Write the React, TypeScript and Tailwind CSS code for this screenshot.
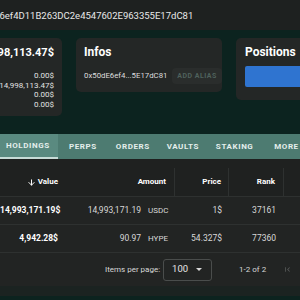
import React from 'react'
import { ArrowDown } from 'lucide-react'

const tabs = ['HOLDINGS', 'PERPS', 'ORDERS', 'VAULTS', 'STAKING', 'MORE']

const rows = [
  { value: '14,993,171.19$', amount: '14,993,171.19', coin: 'USDC', price: '1$', rank: '37161' },
  { value: '4,942.28$', amount: '90.97', coin: 'HYPE', price: '54.327$', rank: '77360' },
]

export default function App() {
  return (
    <div className="w-[300px] h-[300px] overflow-hidden bg-[#0c231f] font-['Roboto',sans-serif] text-white">
      <div className="h-[30px] bg-[#1e2120] flex items-center overflow-hidden">
        <span className="ml-[-32px] pt-[2px] whitespace-nowrap text-[9.5px] text-[#e8e8e8]">0x50dE6ef4D11B263DC2e4547602E963355E17dC81</span>
      </div>

      <div className="mt-[8px] ml-[-40px] flex items-start gap-[14px]">
        <div className="w-[102px] h-[78px] shrink-0 rounded-[5px] bg-[#242726] pt-[7px] pr-[8px] flex flex-col items-end">
          <p className="text-[11px] font-bold leading-[15px] whitespace-nowrap">14,998,113.47$</p>
          <div className="mt-[11px] flex flex-col items-end text-[8px] leading-[9.7px] text-[#e2e2e2]">
            <span>0.00$</span>
            <span>14,998,113.47$</span>
            <span>0.00$</span>
            <span>0.00$</span>
          </div>
        </div>

        <div className="w-[146px] h-[54px] shrink-0 rounded-[5px] bg-[#242726] pl-[8px] pt-[7px]">
          <p className="text-[12px] font-bold leading-[15px]">Infos</p>
          <div className="mt-[8px] flex items-center justify-between">
            <span className="text-[7.8px] text-[#dedede] whitespace-nowrap">0x50dE6ef4...5E17dC81</span>
            <span className="h-[16px] w-[50px] rounded-[4px] bg-[#2a2d2c] flex items-center justify-center text-[7px] font-bold tracking-[0.5px] text-[#4f615c] whitespace-nowrap">ADD ALIAS</span>
          </div>
        </div>

        <div className="w-[120px] h-[62px] shrink-0 rounded-[5px] bg-[#242726] pl-[9px] pt-[7px]">
          <p className="text-[12px] font-bold leading-[15px]">Positions</p>
          <div className="mt-[6px] h-[21px] bg-[#2f74d0] rounded-l-[2px]" />
        </div>
      </div>

      <div className="mt-[18px] ml-[-2px] h-[25px] bg-[#4d7b71] flex">
        {tabs.map((t, i) => (
          <div
            key={t}
            className={
              i === 0
                ? 'min-w-[50px] px-[8px] shrink-0 flex items-center justify-center text-[8px] font-bold tracking-[0.6px] text-[#e4eeec] bg-[#5a8a80] border-b-2 border-[#c8dcd7]'
                : 'min-w-[50px] px-[8px] shrink-0 flex items-center justify-center text-[8px] font-bold tracking-[0.6px] text-[#e4eeec]'
            }
          >
            {t}
          </div>
        ))}
      </div>

      <div className="bg-[#1f2120] pt-[9px]">
        <div className="h-[29px] flex items-center text-[8px] font-bold border-b border-[#2e3130]">
          <div className="w-[66px] shrink-0 flex items-center justify-end gap-[2px] pr-[8px]">
            <ArrowDown size={9} strokeWidth={2.6} />
            <span>Value</span>
          </div>
          <div className="w-[109px] h-full shrink-0 flex items-center justify-end pr-[8px] border-r border-[#2e3130]">Amount</div>
          <div className="w-[54px] h-full shrink-0 flex items-center justify-end pr-[7px] border-r border-[#2e3130]">Price</div>
          <div className="w-[55px] h-full shrink-0 flex items-center justify-end pr-[8px] border-r border-[#2e3130]">Rank</div>
        </div>
      </div>

      <div className="bg-[#222423]">
        {rows.map((r) => (
          <div key={r.coin} className="h-[28px] flex items-center text-[8.5px] border-b border-[#2e3130]">
            <div className="w-[66px] shrink-0 text-right pr-[8px] font-bold">{r.value}</div>
            <div className="w-[75px] shrink-0 text-right text-[#d8d8d8]">{r.amount}</div>
            <div className="w-[34px] shrink-0 pl-[7px] text-[8px] text-[#d8d8d8]">{r.coin}</div>
            <div className="w-[54px] shrink-0 text-right pr-[7px] text-[#d8d8d8]">{r.price}</div>
            <div className="w-[55px] shrink-0 text-right pr-[8px] text-[#d8d8d8]">{r.rank}</div>
          </div>
        ))}

        <div className="h-[33px] flex items-center text-[8px] text-[#d8d8d8]">
          <span className="ml-[105px] whitespace-nowrap">Items per page:</span>
          <div className="ml-[3px] w-[49px] h-[22px] shrink-0 rounded-[3px] border border-[#4a4d4c] flex items-center pl-[8px] pr-[9px] justify-between">
            <span className="text-[9.5px] text-[#e6e6e6]">100</span>
            <span className="w-0 h-0 border-l-[3px] border-r-[3px] border-t-[3px] border-l-transparent border-r-transparent border-t-[#d8d8d8]" />
          </div>
          <span className="ml-[27px] whitespace-nowrap">1-2 of 2</span>
          <svg className="ml-[17px] shrink-0" width="9" height="9" viewBox="0 0 24 24" fill="#5b5e5d">
            <path d="M18.41 16.59L13.82 12l4.59-4.59L17 6l-6 6 6 6zM6 6h2v12H6z" />
          </svg>
        </div>
      </div>
      <div className="h-[10px] bg-[#1b2321]" />
    </div>
  )
}
